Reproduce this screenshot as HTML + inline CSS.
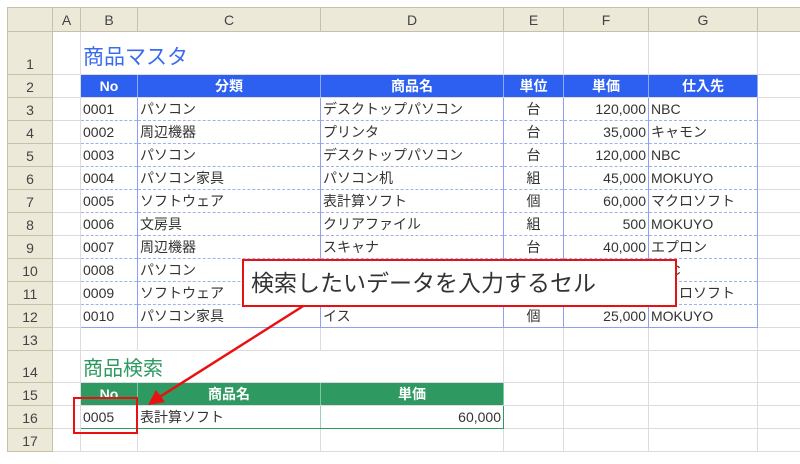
<!DOCTYPE html>
<html><head><meta charset="utf-8"><style>
body{margin:0;width:800px;height:464px;background:#fff;overflow:hidden;position:relative;font-family:"Liberation Sans","Noto Sans CJK JP",sans-serif;}
table{position:absolute;left:7px;top:7px;border-collapse:collapse;table-layout:fixed;width:793px;}
td{padding:0 2px;border-right:1px solid #e0dae0;border-bottom:1px solid #e0dae0;font-size:14px;color:#333;white-space:nowrap;overflow:hidden;line-height:1;}
tr.h td{background:#ece9d8;border:1px solid #c8c0a8;text-align:center;color:#444;height:23px;}
td.rh{background:#ece9d8;border:1px solid #c8c0a8;text-align:center;color:#444;vertical-align:bottom;padding-bottom:3px;}
tr{height:23px;}
.bh td.b{background:#2d60f0;color:#fff;font-weight:bold;text-align:center;border-right:1px solid #8fa8f8;}
.bt td.b{border-right:1px solid #8fa0f0;border-bottom:1px dashed #9fb0f0;}
.bl{border-left:1px solid #8fa0f0 !important;}
.last td.b{border-bottom:1px solid #8fa0f0;}
.r{text-align:right;}.c{text-align:center;}
.gh td.g{background:#2e9960;color:#fff;font-weight:bold;text-align:center;border-right:1px solid #7cc8a0;}
.gt td.g{border-bottom:1px solid #2e9960;border-right:1px solid #9cd0b0;}
</style></head><body>
<table>
<colgroup><col style="width:45px"><col style="width:28px"><col style="width:57px"><col style="width:183px"><col style="width:183px"><col style="width:60px"><col style="width:85px"><col style="width:109px"><col style="width:43px"></colgroup>
<tr class="h"><td></td><td>A</td><td>B</td><td>C</td><td>D</td><td>E</td><td>F</td><td>G</td><td></td></tr>
<tr style="height:43px"><td class="rh">1</td><td></td><td colspan="2" style="color:#3a6cf0;font-size:21px;vertical-align:bottom;padding-bottom:6px;border-right:none">商品マスタ</td><td></td><td></td><td></td><td></td><td></td></tr>
<tr class="bh"><td class="rh">2</td><td></td><td class="b bl">No</td><td class="b">分類</td><td class="b">商品名</td><td class="b">単位</td><td class="b">単価</td><td class="b">仕入先</td><td></td></tr>
<tr class="bt"><td class="rh">3</td><td></td><td class="b bl">0001</td><td class="b">パソコン</td><td class="b">デスクトップパソコン</td><td class="b c">台</td><td class="b r">120,000</td><td class="b">NBC</td><td></td></tr>
<tr class="bt"><td class="rh">4</td><td></td><td class="b bl">0002</td><td class="b">周辺機器</td><td class="b">プリンタ</td><td class="b c">台</td><td class="b r">35,000</td><td class="b">キャモン</td><td></td></tr>
<tr class="bt"><td class="rh">5</td><td></td><td class="b bl">0003</td><td class="b">パソコン</td><td class="b">デスクトップパソコン</td><td class="b c">台</td><td class="b r">120,000</td><td class="b">NBC</td><td></td></tr>
<tr class="bt"><td class="rh">6</td><td></td><td class="b bl">0004</td><td class="b">パソコン家具</td><td class="b">パソコン机</td><td class="b c">組</td><td class="b r">45,000</td><td class="b">MOKUYO</td><td></td></tr>
<tr class="bt"><td class="rh">7</td><td></td><td class="b bl">0005</td><td class="b">ソフトウェア</td><td class="b">表計算ソフト</td><td class="b c">個</td><td class="b r">60,000</td><td class="b">マクロソフト</td><td></td></tr>
<tr class="bt"><td class="rh">8</td><td></td><td class="b bl">0006</td><td class="b">文房具</td><td class="b">クリアファイル</td><td class="b c">組</td><td class="b r">500</td><td class="b">MOKUYO</td><td></td></tr>
<tr class="bt"><td class="rh">9</td><td></td><td class="b bl">0007</td><td class="b">周辺機器</td><td class="b">スキャナ</td><td class="b c">台</td><td class="b r">40,000</td><td class="b">エプロン</td><td></td></tr>
<tr class="bt"><td class="rh">10</td><td></td><td class="b bl">0008</td><td class="b">パソコン</td><td class="b"></td><td class="b c"></td><td class="b r"></td><td class="b">NBC</td><td></td></tr>
<tr class="bt"><td class="rh">11</td><td></td><td class="b bl">0009</td><td class="b">ソフトウェア</td><td class="b"></td><td class="b c"></td><td class="b r"></td><td class="b">マクロソフト</td><td></td></tr>
<tr class="bt last"><td class="rh">12</td><td></td><td class="b bl">0010</td><td class="b">パソコン家具</td><td class="b">イス</td><td class="b c">個</td><td class="b r">25,000</td><td class="b">MOKUYO</td><td></td></tr>
<tr><td class="rh">13</td><td></td><td></td><td></td><td></td><td></td><td></td><td></td><td></td></tr>
<tr style="height:32px"><td class="rh">14</td><td></td><td colspan="2" style="color:#2e9960;font-size:20px;vertical-align:bottom;padding-bottom:3px;border-right:none">商品検索</td><td></td><td></td><td></td><td></td><td></td></tr>
<tr class="gh"><td class="rh">15</td><td></td><td class="g">No</td><td class="g">商品名</td><td class="g">単価</td><td></td><td></td><td></td><td></td></tr>
<tr class="gt"><td class="rh">16</td><td></td><td class="g" style="border-left:1px solid #2e9960">0005</td><td class="g">表計算ソフト</td><td class="g r" style="border-right:1px solid #2e9960">60,000</td><td></td><td></td><td></td><td></td></tr>
<tr><td class="rh">17</td><td></td><td></td><td></td><td></td><td></td><td></td><td></td><td></td></tr>
</table>
<svg style="position:absolute;left:0;top:0" width="800" height="464">
<line x1="308" y1="303" x2="158" y2="398" stroke="#e81010" stroke-width="2.5"/>
<polygon points="148,405 156,390 165,402" fill="#e81010"/>
<rect x="74" y="398" width="63" height="35" fill="none" stroke="#e81010" stroke-width="2"/>
</svg>
<div style="position:absolute;left:242px;top:259px;width:424px;height:44px;border:2px solid #e81010;background:#fff;font-size:23px;color:#333;line-height:44px;padding-left:7px;box-sizing:content-box;white-space:nowrap">検索したいデータを入力するセル</div>
</body></html>
